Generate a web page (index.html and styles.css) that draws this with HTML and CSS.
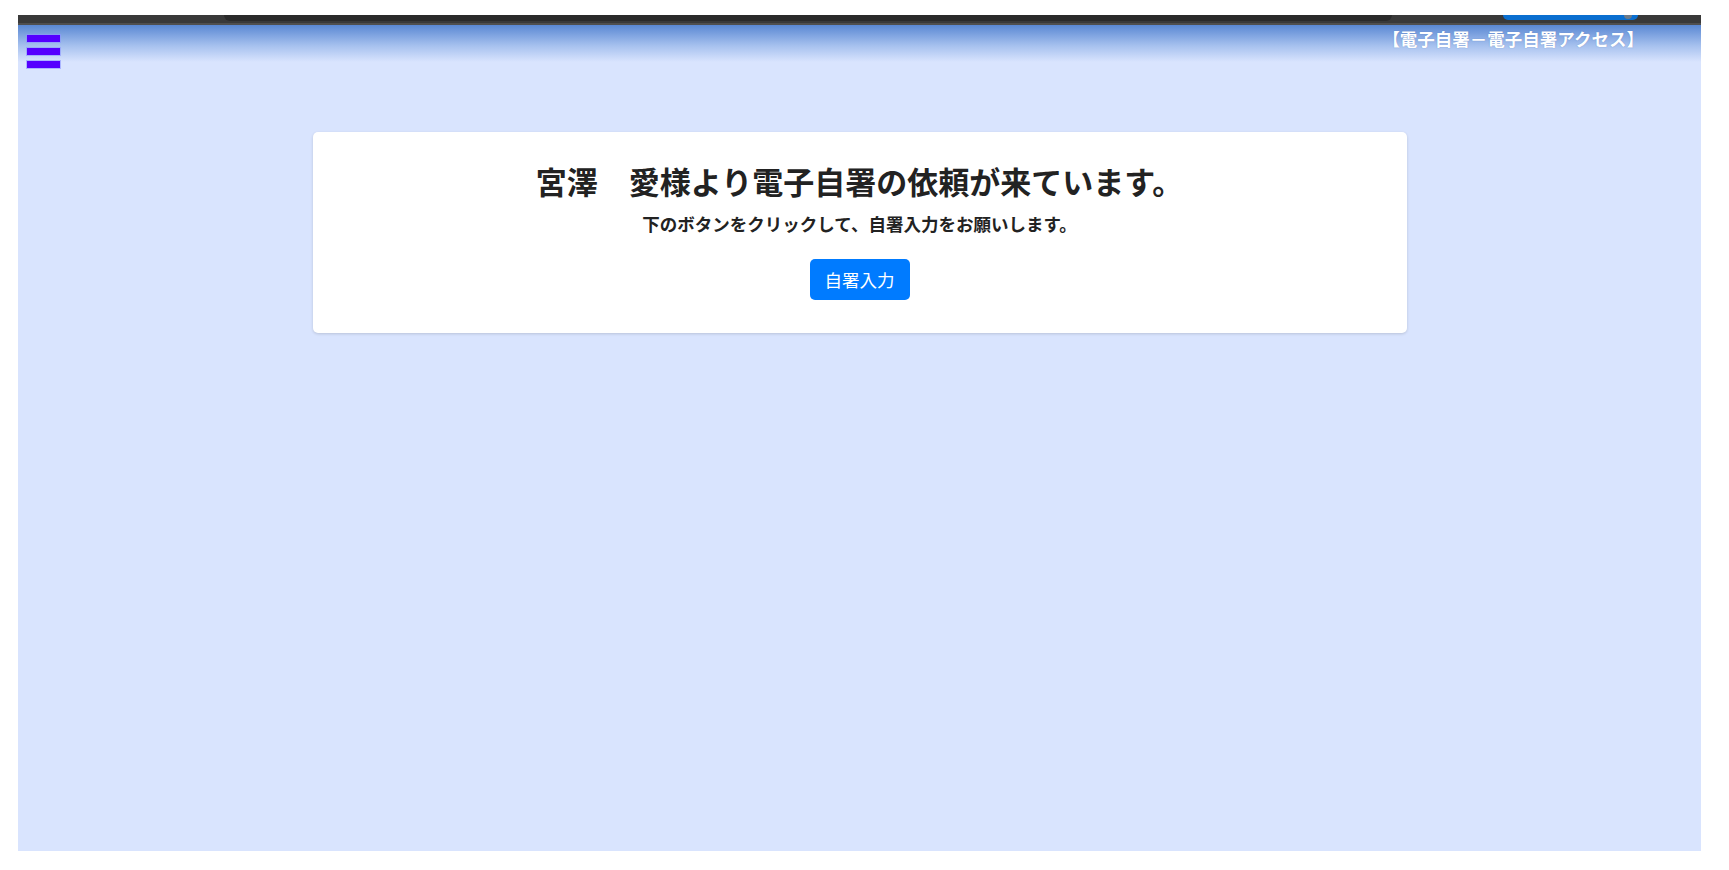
FILE: index.html
```html
<!DOCTYPE html>
<html lang="ja">
<head>
    <meta charset="UTF-8">
    <meta name="viewport" content="width=device-width, initial-scale=1.0">
    <title>電子自署アクセス</title>
    <link rel="stylesheet" href="styles.css">
</head>
<body>
    <div class="frame">
        <div class="chrome">
            <div class="chrome-tab"></div>
            <div class="chrome-pill"><span class="chrome-dot"></span></div>
        </div>

        <header class="header">
            <div class="menu-btn">
                <span></span>
                <span></span>
                <span></span>
            </div>
            <div class="site-title">【電子自署－電子自署アクセス】</div>
        </header>

        <main class="content">
            <div class="card">
                <h1>宮澤　愛様より電子自署の依頼が来ています。</h1>
                <p>下のボタンをクリックして、自署入力をお願いします。</p>
                <button type="button">自署入力</button>
            </div>
        </main>
    </div>
</body>
</html>
```

FILE: styles.css
```css
body {
    margin: 0;
    background: #ffffff;
    font-family: "Noto Sans CJK JP", "Noto Sans", sans-serif;
}

.frame {
    margin: 15px 28px 0 18px;
    height: 836px;
    background-color: #d9e4fe;
    display: flex;
    flex-direction: column;
}

.chrome {
    height: 10px;
    background: #393939;
    border-bottom: 2px solid #4f4f4f;
    box-sizing: border-box;
    display: flex;
    position: relative;
}

.chrome-tab {
    margin-left: 206px;
    width: 1168px;
    height: 6px;
    background: #2a2a2a;
    border-radius: 0 0 6px 6px;
}

.chrome-pill {
    margin-left: 111px;
    width: 135px;
    height: 5px;
    background: #0a6fd0;
    border-radius: 0 0 10px 10px;
    position: relative;
}

.chrome-dot {
    position: absolute;
    right: 6px;
    top: 0;
    width: 8px;
    height: 4px;
    border-radius: 0 0 4px 4px;
    background: #6d7a88;
}

.header {
    height: 37px;
    background: linear-gradient(to bottom, #5a88d3 0%, #a5c0ee 55%, #d9e4fe 100%);
    display: flex;
    justify-content: space-between;
    align-items: flex-start;
    padding: 0 57px 0 9px;
}

.menu-btn {
    display: flex;
    flex-direction: column;
    gap: 6px;
    margin-top: 10px;
    cursor: pointer;
}

.menu-btn span {
    display: block;
    width: 33px;
    height: 7px;
    background: #5500ff;
    box-shadow: 0 0 0 1px rgba(140, 150, 255, 0.6);
}

.site-title {
    color: #ffffff;
    font-size: 17.5px;
    font-weight: bold;
    line-height: 22px;
    margin-top: 3px;
    text-shadow: 0 0 1px rgba(60, 90, 160, 0.6);
}

.content {
    padding-top: 70px;
}

.card {
    width: 1094px;
    margin: 0 auto;
    background: white;
    border-radius: 5px;
    box-shadow: 0 1px 3px rgba(0, 0, 0, 0.15);
    text-align: center;
    padding: 30px 0 33px;
    box-sizing: border-box;
    height: 201px;
}

h1 {
    margin: 0;
    font-size: 31px;
    line-height: 38px;
    font-weight: bold;
    color: #222222;
}

p {
    margin: 10px 0 0;
    font-size: 17.5px;
    line-height: 27px;
    font-weight: 600;
    color: #222222;
}

button {
    margin-top: 22px;
    background-color: #007bff;
    color: white;
    border: none;
    border-radius: 5px;
    font-family: "Noto Sans CJK JP", sans-serif;
    font-size: 17.5px;
    line-height: 27px;
    padding: 7px 15px;
    cursor: pointer;
}

button:hover {
    background-color: #0069d9;
}
```
